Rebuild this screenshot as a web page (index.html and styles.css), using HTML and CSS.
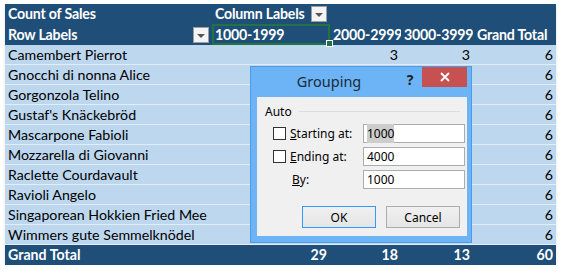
FILE: index.html
```html
<!DOCTYPE html>
<html lang="en">
    <head>
        <title>Count of Sales - Grouping</title>
        <meta charset="UTF-8">
        <meta name="viewport" content="width=device-width, initial-scale=1">
        <link rel="stylesheet" href="styles.css">
    </head>
    <body>
        <main class="sheet">
            <table class="pivot">
                <colgroup>
                    <col class="c-label">
                    <col class="c-b">
                    <col class="c-c">
                    <col class="c-d">
                    <col class="c-e">
                </colgroup>
                <thead>
                    <tr class="head1">
                        <th>Count of Sales</th>
                        <th><div class="withbtn"><span>Column Labels</span><span class="dd"></span></div></th>
                        <th></th>
                        <th></th>
                        <th></th>
                    </tr>
                    <tr class="head2">
                        <th><div class="withbtn"><span>Row Labels</span><span class="dd"></span></div></th>
                        <th class="selected">1000-1999<span class="handle"></span></th>
                        <th>2000-2999</th>
                        <th>3000-3999</th>
                        <th>Grand Total</th>
                    </tr>
                </thead>
                <tbody>
                    <tr><td>Camembert Pierrot</td><td></td><td>3</td><td>3</td><td>6</td></tr>
                    <tr><td>Gnocchi di nonna Alice</td><td></td><td></td><td></td><td>6</td></tr>
                    <tr><td>Gorgonzola Telino</td><td></td><td></td><td></td><td>6</td></tr>
                    <tr><td>Gustaf's Knäckebröd</td><td></td><td></td><td></td><td>6</td></tr>
                    <tr><td>Mascarpone Fabioli</td><td></td><td></td><td></td><td>6</td></tr>
                    <tr><td>Mozzarella di Giovanni</td><td></td><td></td><td></td><td>6</td></tr>
                    <tr><td>Raclette Courdavault</td><td></td><td></td><td></td><td>6</td></tr>
                    <tr><td>Ravioli Angelo</td><td></td><td></td><td></td><td>6</td></tr>
                    <tr><td>Singaporean Hokkien Fried Mee</td><td></td><td></td><td></td><td>6</td></tr>
                    <tr><td>Wimmers gute Semmelknödel</td><td></td><td></td><td></td><td>6</td></tr>
                </tbody>
                <tfoot>
                    <tr><td>Grand Total</td><td>29</td><td>18</td><td>13</td><td>60</td></tr>
                </tfoot>
            </table>

            <div class="dialog">
                <div class="titlebar">
                    <span class="title">Grouping</span>
                    <span class="help">?</span>
                    <span class="close">
                        <svg width="10" height="10" viewBox="0 0 10 10"><path d="M1 1L9 9M9 1L1 9" stroke="#fff" stroke-width="1.8"/></svg>
                    </span>
                </div>
                <div class="panel">
                    <div class="group">
                        <div class="legend"><span>Auto</span><span class="rule"></span></div>
                        <div class="fields">
                            <span class="check"></span>
                            <label><u>S</u>tarting at:</label>
                            <span class="field"><span class="sel">1000</span></span>

                            <span class="check"></span>
                            <label><u>E</u>nding at:</label>
                            <span class="field">4000</span>

                            <span></span>
                            <label class="by"><u>B</u>y:</label>
                            <span class="field">1000</span>
                        </div>
                    </div>
                    <div class="buttons">
                        <button class="btn default">OK</button>
                        <button class="btn">Cancel</button>
                    </div>
                </div>
            </div>
        </main>
    </body>
</html>
```

FILE: styles.css
```css
body {
    margin: 0;
    padding: 4px 6px 0 5px;
    background-color: #fff;
    font-family: Lato, 'Liberation Sans', sans-serif;
    font-size: 14.2px;
    color: #000;
}

.sheet {
    position: relative;
}

.pivot {
    border-collapse: collapse;
    table-layout: fixed;
    width: 551px;
    box-shadow: 0 2px 3px rgba(0, 0, 0, 0.12);
}

.c-label { width: 207px; }
.c-b { width: 118px; }
.c-c { width: 71px; }
.c-d { width: 72px; }
.c-e { width: 83px; }

.pivot th,
.pivot td {
    padding: 0 3px;
    height: 20px;
    line-height: 20px;
    white-space: nowrap;
    overflow: hidden;
}

.pivot thead th {
    background-color: #1f4e78;
    color: #fff;
    font-weight: bold;
    text-align: left;
    letter-spacing: -0.2px;
}

.pivot th:last-child {
    padding-left: 4px;
}

.head2 th {
    height: 21px;
}

.withbtn {
    display: flex;
    justify-content: space-between;
    align-items: center;
}

.dd {
    width: 14px;
    height: 14px;
    border: 1px solid #9d9d9d;
    background-color: #f4f4f4;
    position: relative;
}
    .dd::after {
        content: '';
        position: absolute;
        left: 3px;
        top: 6px;
        border-left: 4px solid transparent;
        border-right: 4px solid transparent;
        border-top: 4px solid #555;
    }

.pivot th.selected {
    position: relative;
    overflow: visible;
    outline: 2px solid #217346;
    outline-offset: -2px;
}

.handle {
    position: absolute;
    right: -3px;
    bottom: -2px;
    width: 5px;
    height: 5px;
    background-color: #217346;
    border: 1px solid #fff;
}

.pivot tbody td {
    background-color: #bdd7ee;
    border-bottom: 1px solid #e2edf8;
    height: 19px;
    line-height: 19px;
}

.pivot td + td {
    text-align: right;
}

.pivot tfoot td {
    background-color: #1f4e78;
    color: #fff;
    font-weight: bold;
}

/* Grouping dialog */
.dialog {
    position: absolute;
    left: 245px;
    top: 62px;
    box-sizing: border-box;
    width: 222px;
    height: 177px;
    padding: 0 4px 6px 6px;
    background-color: #6cb4f6;
    border: 1px solid #4b9be6;
    font-family: 'Noto Sans', 'Open Sans', sans-serif;
    font-size: 12px;
    display: flex;
    flex-direction: column;
}

.titlebar {
    height: 30px;
    display: flex;
    align-items: flex-start;
}

.title {
    flex: 1;
    text-align: center;
    font-size: 14.5px;
    line-height: 28px;
    color: #1e2a38;
    padding-left: 2px;
}

.help {
    width: 22px;
    text-align: center;
    font-weight: bold;
    font-size: 14px;
    line-height: 26px;
    color: #1e1e1e;
    margin-right: 1px;
}

.close {
    width: 45px;
    height: 20px;
    background-color: #c75050;
    display: flex;
    align-items: center;
    justify-content: center;
}

.panel {
    flex: 1;
    background-color: #f0f0f0;
    padding: 6px 7px 0 8px;
}

.legend {
    display: flex;
    align-items: center;
    gap: 7px;
    height: 16px;
}
    .legend .rule {
        flex: 1;
        height: 1px;
        background-color: #dcdcdc;
    }

.fields {
    display: grid;
    grid-template-columns: 13px 69px 102px;
    grid-auto-rows: 19px;
    column-gap: 4px;
    row-gap: 4px;
    align-items: center;
    margin: 5px 0 0 8px;
}

.check {
    width: 11px;
    height: 11px;
    border: 1px solid #333;
    background-color: #fff;
}

label u {
    text-underline-offset: 1px;
}

.by {
    padding-left: 2px;
}

.field {
    height: 17px;
    line-height: 17px;
    border: 1px solid #acacac;
    background-color: #fff;
    padding: 0 3px;
}

.sel {
    background-color: #cdcdcd;
    padding: 1px 0;
}

.buttons {
    display: flex;
    justify-content: flex-end;
    gap: 10px;
    margin-top: 17px;
}

.btn {
    width: 74px;
    height: 22px;
    border: 1px solid #acacac;
    background: linear-gradient(#f0f0f0, #e5e5e5);
    font-family: inherit;
    font-size: 12px;
    color: #000;
    padding: 0;
}
    .btn.default {
        border-color: #3399ff;
    }
```
